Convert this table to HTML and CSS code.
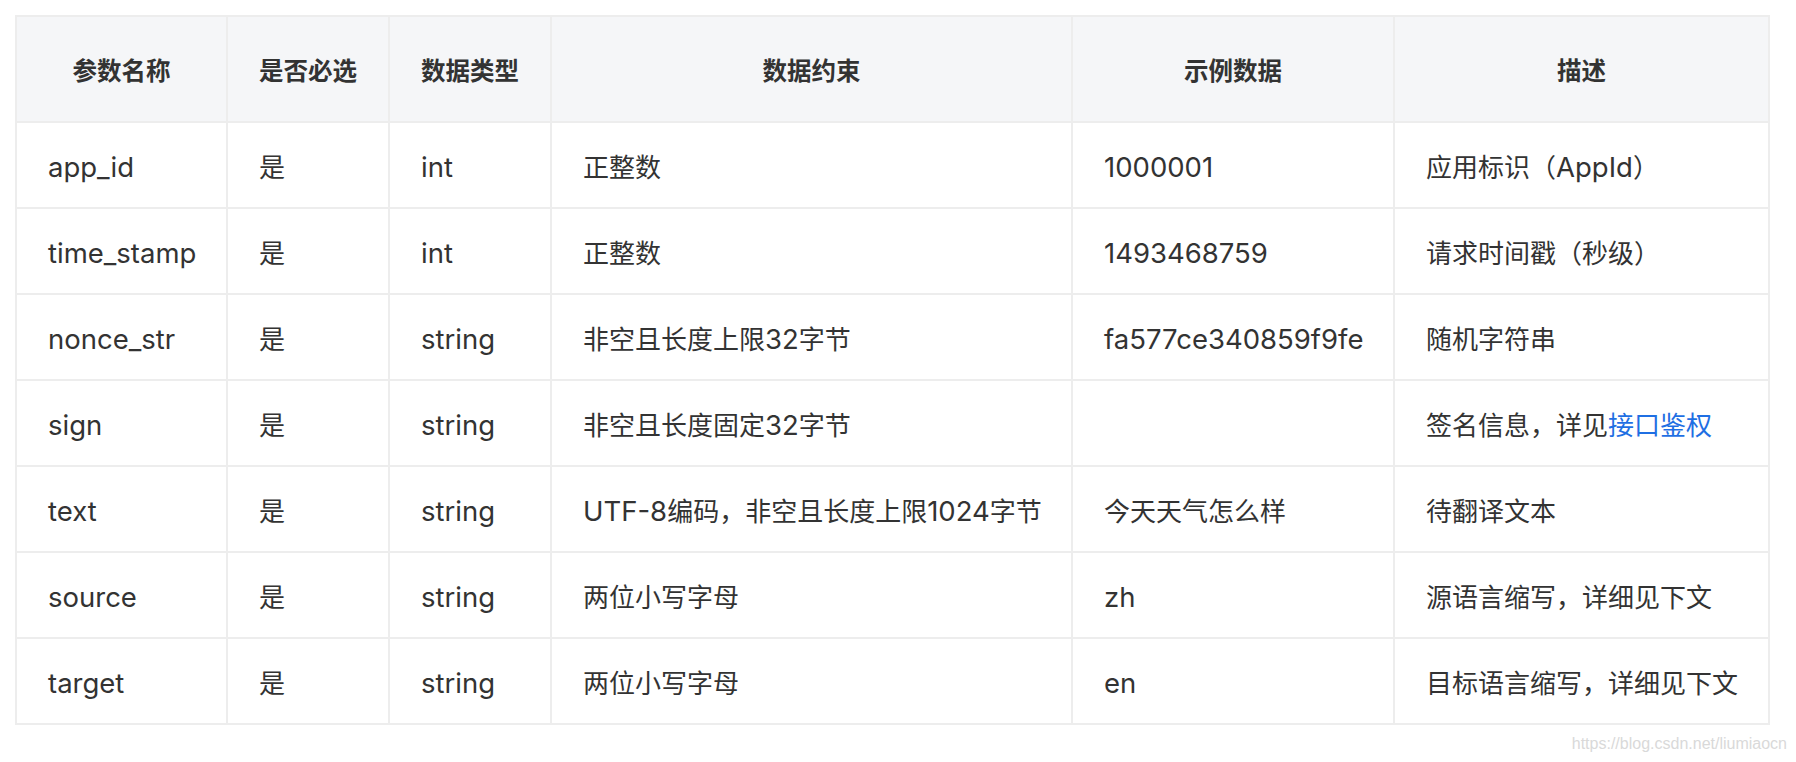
FILE: index.html
```html
<!DOCTYPE html>
<html lang="zh-CN">
<head>
<meta charset="utf-8">
<title>参数说明</title>
<link rel="stylesheet" href="styles.css">
</head>
<body>
<div class="page">
  <table class="params">
    <colgroup>
      <col class="c-name">
      <col class="c-req">
      <col class="c-type">
      <col class="c-rule">
      <col class="c-example">
      <col class="c-desc">
    </colgroup>
    <thead>
      <tr>
        <th>参数名称</th>
        <th>是否必选</th>
        <th>数据类型</th>
        <th>数据约束</th>
        <th>示例数据</th>
        <th>描述</th>
      </tr>
    </thead>
    <tbody>
      <tr>
        <td><span class="en">app_id</span></td><td>是</td><td><span class="en">int</span></td><td>正整数</td><td><span class="en">1000001</span></td><td>应用标识（<span class="en">AppId</span>）</td>
      </tr>
      <tr>
        <td><span class="en">time_stamp</span></td><td>是</td><td><span class="en">int</span></td><td>正整数</td><td><span class="en">1493468759</span></td><td>请求时间戳（秒级）</td>
      </tr>
      <tr>
        <td><span class="en">nonce_str</span></td><td>是</td><td><span class="en">string</span></td><td>非空且长度上限<span class="en">32</span>字节</td><td><span class="en">fa577ce340859f9fe</span></td><td>随机字符串</td>
      </tr>
      <tr>
        <td><span class="en">sign</span></td><td>是</td><td><span class="en">string</span></td><td>非空且长度固定<span class="en">32</span>字节</td><td></td><td>签名信息，详见<a class="link" href="#">接口鉴权</a></td>
      </tr>
      <tr>
        <td><span class="en">text</span></td><td>是</td><td><span class="en">string</span></td><td><span class="en">UTF-8</span>编码，非空且长度上限<span class="en">1024</span>字节</td><td>今天天气怎么样</td><td>待翻译文本</td>
      </tr>
      <tr>
        <td><span class="en">source</span></td><td>是</td><td><span class="en">string</span></td><td>两位小写字母</td><td><span class="en">zh</span></td><td>源语言缩写，详细见下文</td>
      </tr>
      <tr>
        <td><span class="en">target</span></td><td>是</td><td><span class="en">string</span></td><td>两位小写字母</td><td><span class="en">en</span></td><td>目标语言缩写，详细见下文</td>
      </tr>
    </tbody>
  </table>
  <div class="watermark">https://blog.csdn.net/liumiaocn</div>
</div>
</body>
</html>
```

FILE: styles.css
```css
html, body {
  margin: 0;
  padding: 0;
  background: #ffffff;
}

.page {
  padding: 15px 0 0 15px;
  font-family: "Noto Sans CJK SC", sans-serif;
  color: #333333;
}

.params {
  table-layout: fixed;
  width: 1755px;
  border-collapse: separate;
  border-spacing: 0;
  border-top: 2px solid #ededed;
  border-left: 2px solid #ededed;
  font-size: 26px;
}

.c-name { width: 211px; }
.c-req { width: 162px; }
.c-type { width: 162px; }
.c-rule { width: 521px; }
.c-example { width: 322px; }
.c-desc { width: 375px; }

.params th,
.params td {
  box-sizing: border-box;
  border-right: 2px solid #ededed;
  border-bottom: 2px solid #ededed;
  vertical-align: middle;
  white-space: nowrap;
  overflow: hidden;
}

.params thead tr {
  height: 106px;
}

.params th {
  background: #f5f6f8;
  font-size: 24.5px;
  font-weight: 600;
  text-align: center;
  padding: 0 8px;
  color: #333333;
}

.params tbody tr {
  height: 86px;
}

.params td {
  text-align: left;
  padding: 0 8px 0 31px;
  font-weight: 400;
}

.en {
  font-family: Inter, "Noto Sans CJK SC", sans-serif;
  font-size: 27.5px;
}

.link {
  color: #1f6fe3;
  text-decoration: none;
}

.watermark {
  text-align: right;
  padding-right: 9px;
  margin-top: 10px;
  font-family: "Liberation Sans", Arial, sans-serif;
  font-size: 16px;
  line-height: 18px;
  color: #d9d9d9;
}
```
